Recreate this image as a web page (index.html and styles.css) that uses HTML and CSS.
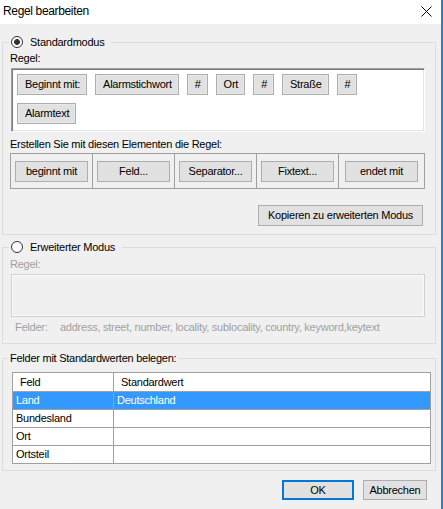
FILE: index.html
```html
<!DOCTYPE html>
<html lang="de">
<head>
<meta charset="utf-8">
<title>Regel bearbeiten</title>
<link rel="stylesheet" href="styles.css">
</head>
<body>
<div class="dialog">
  <header class="titlebar">
    <span class="title">Regel bearbeiten</span>
    <span class="close" aria-label="Schließen">
      <svg width="11" height="11" viewBox="0 0 11 11"><path d="M0.5 0.5L10.5 10.5M10.5 0.5L0.5 10.5" stroke="#000" stroke-width="1" fill="none"/></svg>
    </span>
  </header>

  <main class="content">
    <fieldset class="group group-std">
      <legend><label class="radio"><input type="radio" name="mode" checked><span>Standardmodus</span></label></legend>
      <p class="label">Regel:</p>
      <div class="rulebox">
        <span class="chip">Beginnt mit:</span>
        <span class="chip">Alarmstichwort</span>
        <span class="chip">#</span>
        <span class="chip">Ort</span>
        <span class="chip">#</span>
        <span class="chip">Straße</span>
        <span class="chip">#</span>
        <span class="chip">Alarmtext</span>
      </div>
      <p class="label label-build">Erstellen Sie mit diesen Elementen die Regel:</p>
      <div class="palette">
        <div class="cell"><button class="btn">beginnt mit</button></div>
        <div class="cell"><button class="btn">Feld...</button></div>
        <div class="cell"><button class="btn">Separator...</button></div>
        <div class="cell"><button class="btn">Fixtext...</button></div>
        <div class="cell"><button class="btn">endet mit</button></div>
      </div>
      <div class="actions"><button class="btn btn-copy">Kopieren zu erweiterten Modus</button></div>
    </fieldset>

    <fieldset class="group group-adv">
      <legend><label class="radio"><input type="radio" name="mode"><span>Erweiterter Modus</span></label></legend>
      <p class="label disabled">Regel:</p>
      <div class="rulebox-disabled"></div>
      <div class="fields disabled">
        <span class="fields-label">Felder:</span>
        <span>address, street, number, locality, sublocality, country, keyword,keytext</span>
      </div>
    </fieldset>

    <fieldset class="group group-defaults">
      <legend>Felder mit Standardwerten belegen:</legend>
      <table class="list">
        <colgroup><col class="col-field"><col></colgroup>
        <thead><tr><th>Feld</th><th>Standardwert</th></tr></thead>
        <tbody>
          <tr class="selected"><td>Land</td><td>Deutschland</td></tr>
          <tr><td>Bundesland</td><td></td></tr>
          <tr><td>Ort</td><td></td></tr>
          <tr><td>Ortsteil</td><td></td></tr>
        </tbody>
      </table>
    </fieldset>

    <footer class="footer">
      <button class="btn btn-ok">OK</button>
      <button class="btn btn-cancel">Abbrechen</button>
    </footer>
  </main>
</div>
</body>
</html>
```
FILE: styles.css
```css
* { box-sizing: border-box; }

html, body { margin: 0; padding: 0; }

body {
  width: 443px;
  height: 509px;
  overflow: hidden;
  background: #f0f0f0;
  font-family: "Liberation Sans", Arial, sans-serif;
  font-size: 11px;
  line-height: 13px;
  letter-spacing: -0.25px;
  color: #000;
}

.dialog {
  height: 509px;
  display: flex;
  flex-direction: column;
  border-right: 2px solid #1883d7;
}

/* title bar */
.titlebar {
  flex: none;
  height: 24px;
  background: #fff;
  display: flex;
  justify-content: space-between;
  align-items: flex-start;
  padding: 3px 9px 0 3px;
}

.title {
  font-size: 12px;
  line-height: 16px;
  letter-spacing: -0.35px;
}

.close {
  display: block;
  height: 11px;
  margin-top: 3px;
}

.close svg { display: block; }

/* dialog body */
.content {
  flex: 1;
  padding: 11px 5px 0 2px;
}

.group {
  margin: 0;
  min-width: 0;
  border: 1px solid #dcdcdc;
  padding: 0 10px 8px 7px;
}

.group legend {
  height: 14px;
  line-height: 14px;
  padding: 0 7px 0 2px;
  margin-left: -1px;
}

.group-adv { margin-top: 5px; padding-bottom: 9px; }

.group-defaults {
  margin-top: 7px;
  padding: 0 5px 6px 9px;
}

.group-defaults legend {
  margin-left: -4px;
  padding: 0 3px 0 2px;
}

.radio {
  display: flex;
  align-items: center;
  gap: 7px;
}

.radio input {
  appearance: none;
  -webkit-appearance: none;
  margin: 0;
  width: 12px;
  height: 12px;
  border: 1px solid #333;
  border-radius: 50%;
  background: #fff;
}

.radio input:checked {
  background: radial-gradient(circle, #333 0 2.6px, #fff 3.2px);
}

.label {
  margin: 3px 0 3px;
}

.label-build { margin: 6px 0 2px; }

.disabled { color: #a0a0a0; }

.group-adv .label { margin-top: 4px; }

/* rule editor */
.rulebox {
  margin-left: 1px;
  height: 64px;
  background: #fff;
  border: 1px solid;
  border-color: #a0a0a0 #fff #fff #a0a0a0;
  box-shadow: inset 1px 1px 0 #7a7a7a, inset -1px -1px 0 #e3e3e3;
  display: flex;
  flex-wrap: wrap;
  align-content: flex-start;
  gap: 8px;
  padding: 5px 0 0 5px;
}

.chip {
  height: 21px;
  line-height: 19px;
  padding: 0 6px 0 7px;
  border: 1px solid #adadad;
  background: #e1e1e1;
  box-shadow: inset 0 0 0 1px #e8e8e8;
}

.btn {
  font: inherit;
  letter-spacing: inherit;
  color: #000;
  background: #e1e1e1;
  border: 1px solid #adadad;
  height: 21px;
  margin: 0;
  padding: 0;
}

.palette {
  display: grid;
  grid-template-columns: 81px 82px 82px 82px 1fr;
  border: 1px solid #a0a0a0;
}

.cell { padding: 7px 0 6px 4px; }
.cell + .cell { border-left: 1px solid #a0a0a0; }
.cell:last-child { padding-left: 6px; }
.cell .btn { width: 73px; }

.actions {
  display: flex;
  justify-content: flex-end;
  margin-top: 16px;
  padding-right: 2px;
}

.btn-copy { width: 165px; }

/* extended mode (disabled) */
.rulebox-disabled {
  margin-left: 1px;
  height: 43px;
  border: 1px solid #d0d0d0;
  box-shadow: inset 0 0 0 1px #fafafa;
}

.fields {
  display: flex;
  margin-top: 4px;
  padding-left: 5px;
}

.fields-label { flex: none; width: 45px; }

/* default values list */
.list {
  margin-top: 7px;
  width: 419px;
  border-collapse: collapse;
  table-layout: fixed;
  background: #fff;
}

.col-field { width: 101px; }

.list th,
.list td {
  border: 1px solid #a0a0a0;
  height: 18px;
  padding: 0 0 0 3px;
  text-align: left;
  font-weight: normal;
  white-space: nowrap;
}

.list th { height: 19px; padding-left: 7px; }

.list .selected td {
  background: #3399ff;
  color: #fff;
}

/* dialog buttons */
.footer {
  display: flex;
  justify-content: flex-end;
  gap: 9px;
  margin-top: 9px;
  padding-right: 9px;
}

.footer .btn { height: 20px; }
.btn-ok { width: 72px; border: 2px solid #0078d7; }
.btn-cancel { width: 64px; }
```
